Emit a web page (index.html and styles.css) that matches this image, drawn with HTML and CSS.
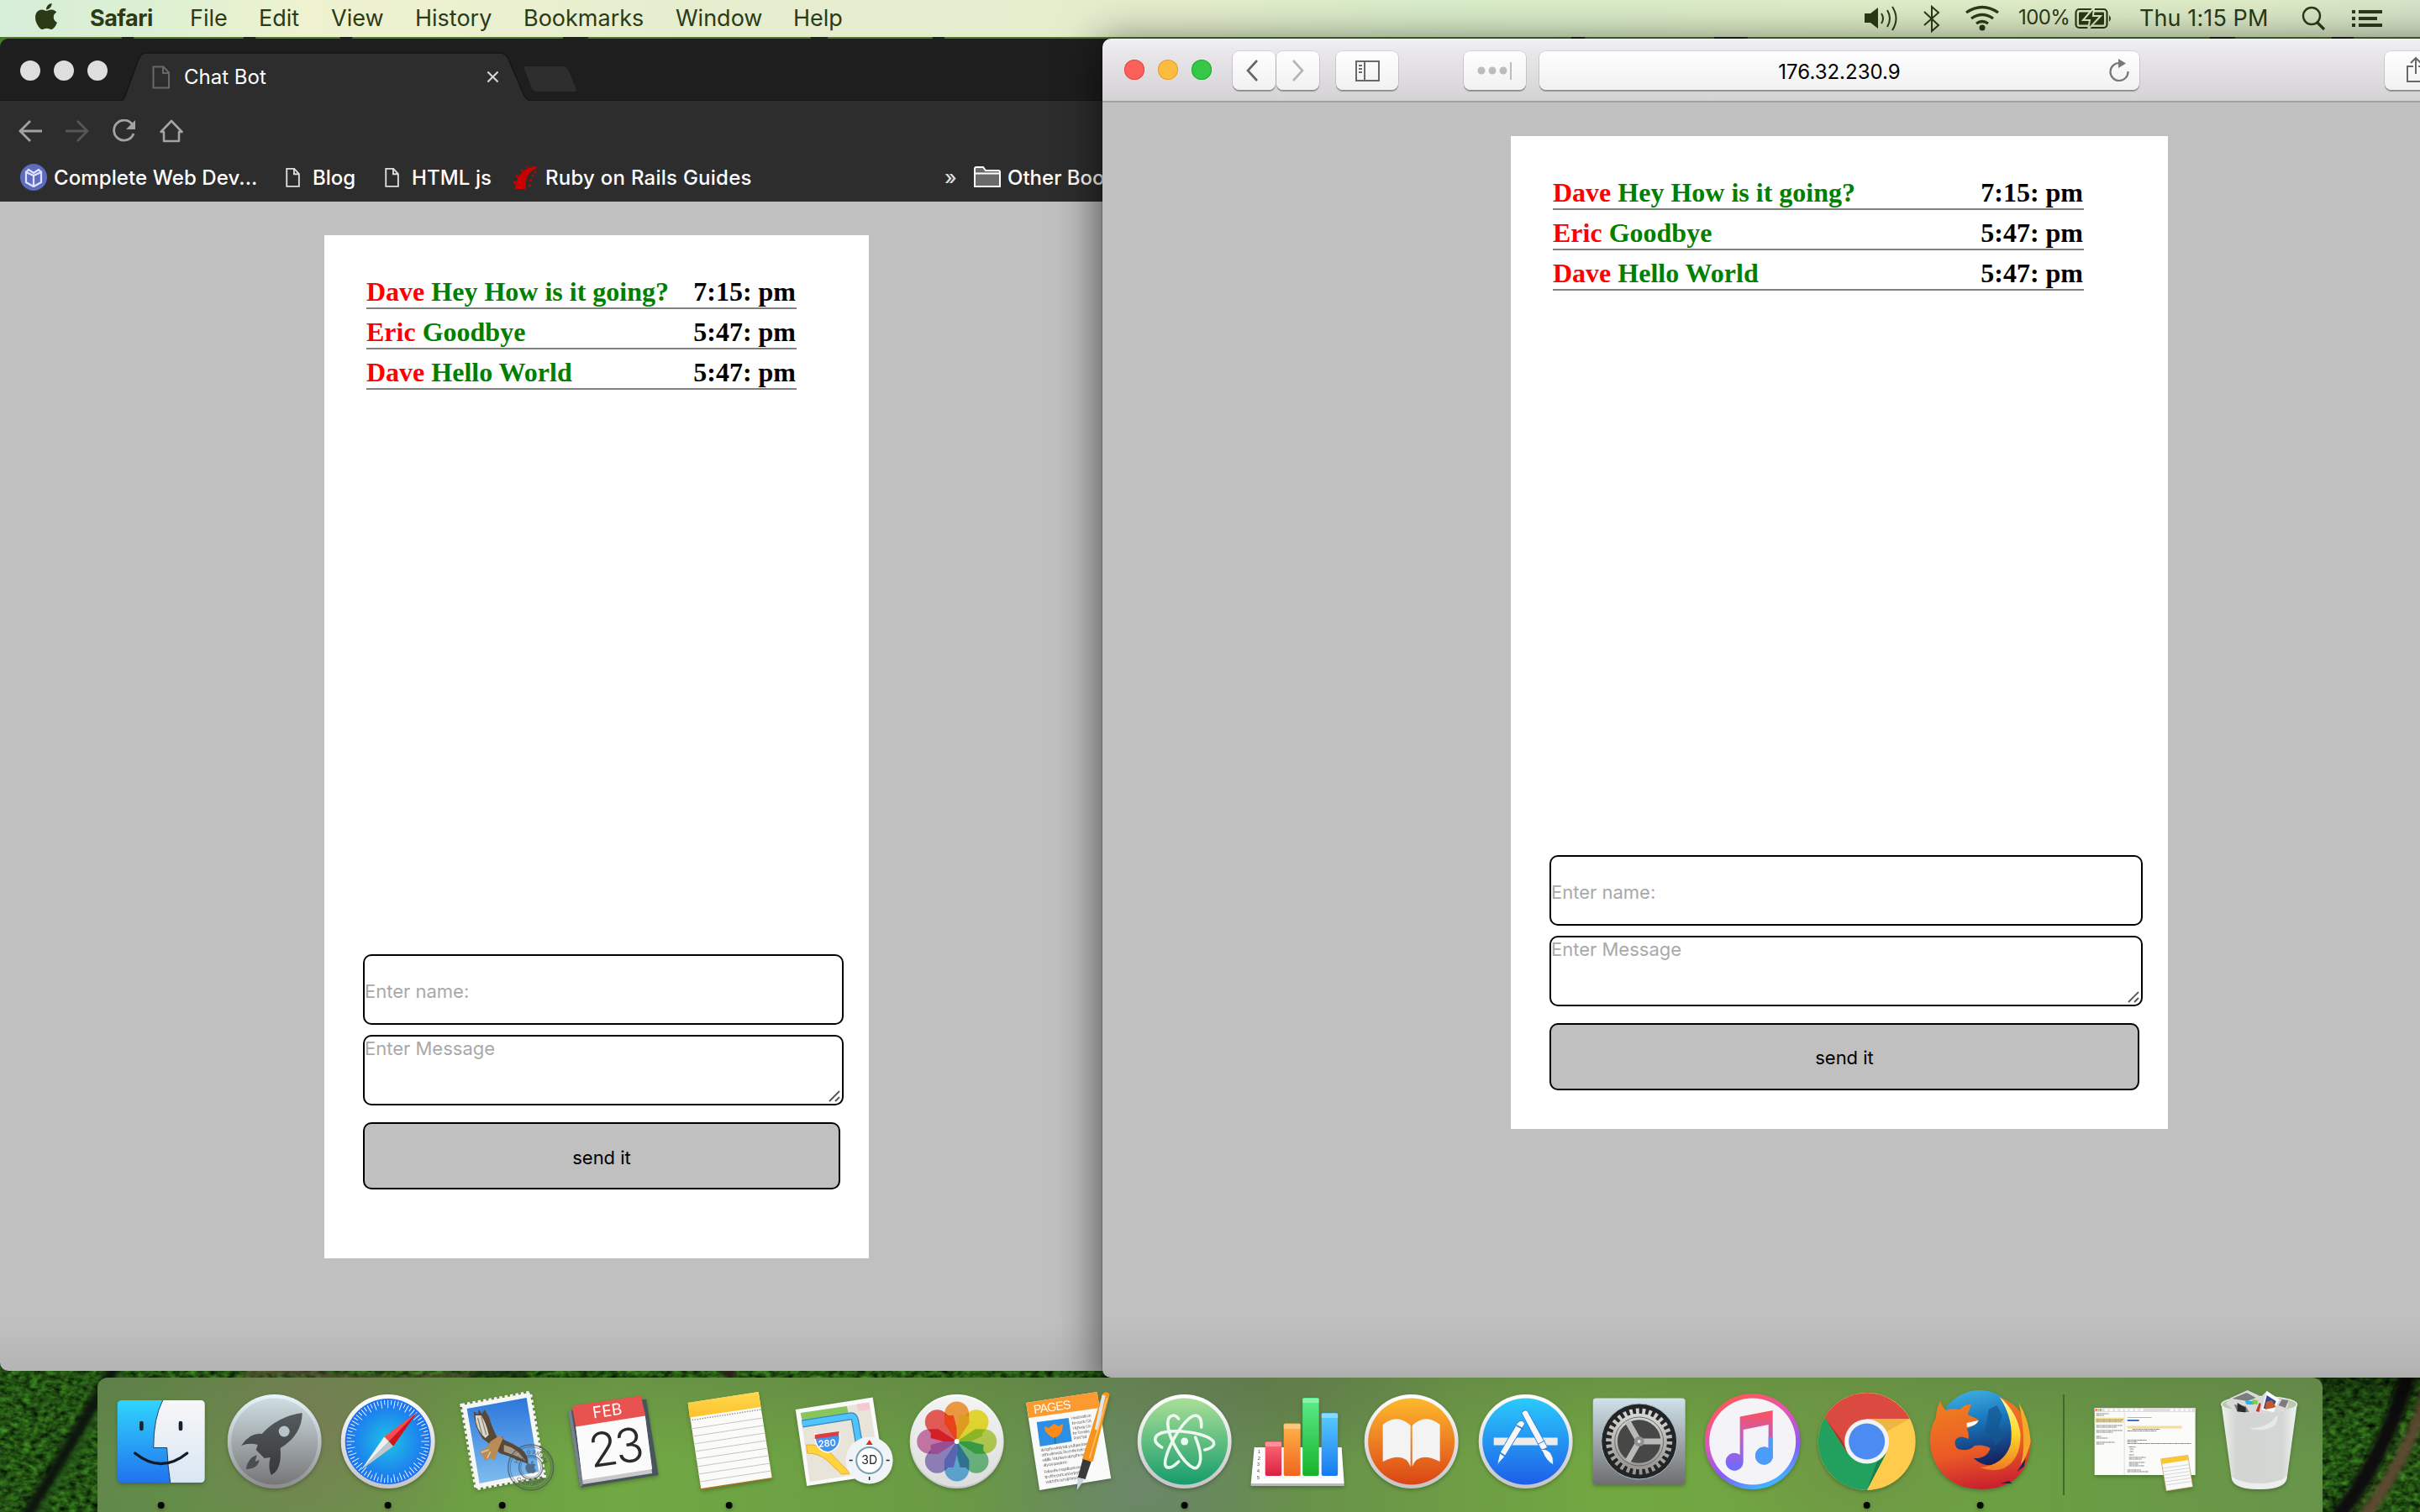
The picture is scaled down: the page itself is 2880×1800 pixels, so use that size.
FILE: index.html
```html
<!DOCTYPE html>
<html lang="en">
<head>
<meta charset="utf-8">
<title>Chat Bot</title>
<link rel="stylesheet" href="styles.css">
</head>
<body>
<div class="desktop">
  <svg class="wallpaper" viewBox="0 0 2880 1800" aria-hidden="true">
    <defs>
      <filter id="grass" x="0" y="0" width="100%" height="100%" color-interpolation-filters="sRGB">
        <feTurbulence type="fractalNoise" baseFrequency="0.11 0.16" numOctaves="3" seed="4"/>
        <feColorMatrix values="0.2 0.25 0 0 -0.09  0.35 0.55 0 0 -0.13  0.1 0.15 0 0 -0.05  0 0 0 0 1"/>
      </filter>
      <filter id="soft"><feGaussianBlur stdDeviation="3"/></filter>
    </defs>
    <rect width="2880" height="60" fill="#4a7a2a"/>
    <rect y="1600" width="2880" height="200" filter="url(#grass)"/>
    <g filter="url(#soft)" fill="none">
      <path d="M30 1808Q90 1710 138 1626" stroke="#0d120a" stroke-width="15"/>
      <path d="M44 1808Q104 1712 150 1626" stroke="#2a5f1e" stroke-width="4"/>
      <path d="M2812 1808Q2872 1725 2890 1650" stroke="#5d4a30" stroke-width="14"/>
      <path d="M2780 1808Q2836 1740 2866 1635" stroke="#0b0f08" stroke-width="20"/>
      <path d="M290 1637q60-8 90 0t180 2" stroke="#5e4a3a" stroke-width="6"/>
      <path d="M560 1637q30-6 70-2" stroke="#15200e" stroke-width="6"/>
      <path d="M860 1636h16" stroke="#2b1f14" stroke-width="12"/>
    </g>
    <path d="M145 46l14-3M290 46l14-3M405 46l14-3M670 46l30-3M965 46l20-3M1110 46l14-3M1870 46l16-3M2040 46l40-3M2630 46l30-3M2775 46l26-3" stroke="#1b2a12" stroke-width="5"/>
  </svg>

  <header class="menubar">
    <svg class="apple" viewBox="4 32 376 448"><path fill="currentColor" d="M318.700 268.700c-.2-36.700 16.400-64.400 50-84.800-18.800-26.900-47.200-41.700-84.700-44.600-35.500-2.800-74.300 20.700-88.500 20.700-15 0-49.400-19.700-76.400-19.700C63.300 141.200 4 184.800 4 273.500q0 39.300 14.400 81.200c12.800 36.700 59 126.700 107.200 125.200 25.200-.6 43-17.900 75.800-17.900 31.800 0 48.300 17.900 76.400 17.900 48.600-.7 90.400-82.500 102.600-119.300-65.200-30.700-61.700-90-61.700-91.900zm-56.600-164.200c27.300-32.400 24.800-61.900 24-72.500-24.100 1.400-52 16.400-67.900 34.900-17.500 19.800-27.800 44.300-25.600 71.900 26.100 2 49.900-11.400 69.500-34.300z"/></svg>
    <nav class="menus">
      <b class="m-safari">Safari</b><span class="m-file">File</span><span class="m-edit">Edit</span><span class="m-view">View</span><span class="m-history">History</span><span class="m-bookmarks">Bookmarks</span><span class="m-window">Window</span><span class="m-help">Help</span>
    </nav>
    <div class="status">
      <svg class="s-volume" viewBox="0 0 42 44"><path d="M0 16h7l9-7v25l-9-7H0z" fill="currentColor"/><path d="M20 16q4 6 0 12M27 12q6 10 0 20M33 8q9 14 0 28" fill="none" stroke="currentColor" stroke-width="2"/></svg>
      <svg class="s-bt" viewBox="0 0 20 44"><path d="M1 14l17 16-8 7V8l8 7L1 30" fill="none" stroke="currentColor" stroke-width="2"/></svg>
      <svg class="s-wifi" viewBox="0 0 42 44"><path d="M2 15q19-13 38 0M8 22q13-9 26 0M14 28q7-5 14 0" fill="none" stroke="currentColor" stroke-width="3.200"/><circle cx="21" cy="33" r="3.500" fill="currentColor"/></svg>
      <span class="percent">100%</span>
      <svg class="s-battery" viewBox="0 0 46 44"><rect x="1.500" y="11" width="37" height="22" rx="4" fill="none" stroke="currentColor" stroke-width="2.200"/><rect x="5" y="14.500" width="30" height="15" rx="1" fill="currentColor"/><path d="M41 18q4 4 0 8z" fill="currentColor"/><path d="M23 9L10 24h8l-2 11 15-16H22z" fill="currentColor" stroke="#dfedc9" stroke-width="2"/></svg>
      <span class="clock">Thu 1:15 PM</span>
      <svg class="s-search" viewBox="0 0 30 44"><circle cx="12" cy="19" r="10" fill="none" stroke="currentColor" stroke-width="2.400"/><path d="M18 26l9 9" stroke="currentColor" stroke-width="3.200"/></svg>
      <svg class="s-list" viewBox="0 0 36 44"><path d="M0 14h4M8 14h28M0 22h4M8 22h22M0 30h4M8 30h28" stroke="currentColor" stroke-width="4"/></svg>
    </div>
  </header>

  <section class="window chrome">
    <div class="tabstrip">
      <div class="lights"><i></i><i></i><i></i></div>
      <div class="tab">
        <svg class="tab-shape" viewBox="0 0 486 58"><path d="M0 58Q3 57 5 49L20 8Q23 2 28 1H452Q457 2 460 8L478 50Q481 57 486 58z" fill="#2d2d2d"/><path d="M0 57.500Q3 56 5 49L20 8Q23 2 28 1H452Q457 2 460 8L478 50Q481 57 486 57.500" fill="none" stroke="#151515" stroke-width="1.500"/></svg>
        <svg class="tab-doc" viewBox="0 0 22 28"><path d="M1.500 1.500h12l6.500 7v18H1.500zM13 1.500V9h7" fill="none" stroke="#686868" stroke-width="2"/></svg>
        <span class="tab-title">Chat Bot</span>
        <svg class="tab-close" viewBox="0 0 16 16"><path d="M1.500 1.500l13 13M14.500 1.500l-13 13" stroke="#d8d8d8" stroke-width="2.200"/></svg>
      </div>
      <svg class="newtab" viewBox="0 0 66 30"><path d="M3 0H47Q51 0 53 4L63 27Q64 30 60 30H16Q12 30 10 26L1 3Q0 0 3 0z" fill="#2e2e2e"/></svg>
    </div>
    <div class="nav">
      <svg viewBox="0 0 28 28"><path d="M28 14H3M14 2L2 14l12 12" fill="none" stroke="#a3a3a3" stroke-width="2.800"/></svg>
      <svg class="dim" viewBox="0 0 28 28"><path d="M0 14h25M14 2l12 12-12 12" fill="none" stroke="#575757" stroke-width="2.800"/></svg>
      <svg viewBox="0 0 28 28"><path d="M24 7A12 12 0 1 0 25 17" fill="none" stroke="#a3a3a3" stroke-width="2.800"/><path d="M27 1v11H16z" fill="#a3a3a3"/></svg>
      <svg viewBox="0 0 28 28"><path d="M1.500 15L14 2l12.500 13H23v11H5V15z" fill="none" stroke="#a3a3a3" stroke-width="2.600" stroke-linejoin="round"/></svg>
    </div>
    <div class="bookmarks">
      <svg class="bm-book" viewBox="0 0 32 32"><circle cx="16" cy="16" r="16" fill="#5e6cc0"/><path d="M7 10l9 4 9-4v12l-9 5-9-5zM16 14v12M7 10l3-3 6 4 6-4 3 3" fill="none" stroke="#dfe3ff" stroke-width="2.200"/></svg>
      <span class="bm-complete">Complete Web Dev...</span>
      <svg class="bm-doc d1" viewBox="0 0 18 25"><path d="M1.300 1.300h9.500l6 6.500V23.500H1.300zM10.500 1.300V8h6" fill="none" stroke="#ddd" stroke-width="2"/></svg>
      <span class="bm-blog">Blog</span>
      <svg class="bm-doc d2" viewBox="0 0 18 25"><path d="M1.300 1.300h9.500l6 6.500V23.500H1.300zM10.500 1.300V8h6" fill="none" stroke="#ddd" stroke-width="2"/></svg>
      <span class="bm-html">HTML js</span>
      <svg class="bm-ruby" viewBox="0 0 30 28"><path d="M2 28C3 16 10 2 27 1l1 2C18 7 13 16 15 28z" fill="#c00"/><path d="M0 20l3 1M3 12l3 2M9 5l2 2M16 1l1 1M22 13l2-1M19 18h3M18 24h3M25 8l2 0" stroke="#c00" stroke-width="2.400"/></svg>
      <span class="bm-rails">Ruby on Rails Guides</span>
      <span class="more">»</span>
      <svg class="bm-folder" viewBox="0 0 32 26"><path d="M1 24V3q0-2 2-2h8l3 4h15q2 0 2 2v17z" fill="#6a6a6a" stroke="#fff" stroke-width="2"/><path d="M1 8.500h30" stroke="#fff" stroke-width="2"/></svg>
      <span class="bm-other">Other Bookmarks</span>
    </div>
    <main class="page">
      <div class="chat">
        <ul class="messages">
          <li><span><em>Dave</em> <strong>Hey How is it going?</strong></span><time>7:15: pm</time></li>
          <li><span><em>Eric</em> <strong>Goodbye</strong></span><time>5:47: pm</time></li>
          <li><span><em>Dave</em> <strong>Hello World</strong></span><time>5:47: pm</time></li>
        </ul>
        <form class="compose">
          <input type="text" placeholder="Enter name:">
          <div class="area"><textarea placeholder="Enter Message"></textarea><svg class="grip" viewBox="0 0 14 14"><path d="M1 13L13 1M8 13l5-5" stroke="#555" stroke-width="1.800"/></svg></div>
          <button type="button">send it</button>
        </form>
      </div>
    </main>
  </section>

  <section class="window safari">
    <div class="toolbar">
      <div class="lights"><i class="red"></i><i class="yellow"></i><i class="green"></i></div>
      <div class="tb back"><svg viewBox="0 0 51 46"><path d="M29 11L18 23l11 12" fill="none" stroke="#666" stroke-width="2.600"/></svg></div>
      <div class="tb fwd"><svg viewBox="0 0 51 46"><path d="M20 11l11 12-11 12" fill="none" stroke="#b5b5b5" stroke-width="2.600"/></svg></div>
      <div class="tb side"><svg viewBox="0 0 74 46"><path d="M24 12h27v23H24zM34 12v23M27 17h4M27 21h4M27 25h4" fill="none" stroke="#686868" stroke-width="2"/></svg></div>
      <div class="tb dots"><svg viewBox="0 0 74 46"><g fill="#bcbcbc"><circle cx="21" cy="23" r="4.500"/><circle cx="34" cy="23" r="4.500"/><circle cx="47" cy="23" r="4.500"/><path d="M55 13h2v21h-2z"/></g></svg></div>
      <div class="tb url"><span>176.32.230.9</span><svg class="reload" viewBox="0 0 24 28"><path d="M12 5A10.500 10.500 0 1 0 22.500 15" fill="none" stroke="#777" stroke-width="2.200"/><path d="M11 0l9 5.500L11 11z" fill="#777"/></svg></div>
      <div class="tb share"><svg viewBox="0 0 74 46"><path d="M34 18h-7v18h20V18h-7M37 27V8M31 14l6-6 6 6" fill="none" stroke="#686868" stroke-width="2"/></svg></div>
    </div>
    <main class="page">
      <div class="chat">
        <ul class="messages">
          <li><span><em>Dave</em> <strong>Hey How is it going?</strong></span><time>7:15: pm</time></li>
          <li><span><em>Eric</em> <strong>Goodbye</strong></span><time>5:47: pm</time></li>
          <li><span><em>Dave</em> <strong>Hello World</strong></span><time>5:47: pm</time></li>
        </ul>
        <form class="compose">
          <input type="text" placeholder="Enter name:">
          <div class="area"><textarea placeholder="Enter Message"></textarea><svg class="grip" viewBox="0 0 14 14"><path d="M1 13L13 1M8 13l5-5" stroke="#555" stroke-width="1.800"/></svg></div>
          <button type="button">send it</button>
        </form>
      </div>
    </main>
  </section>

  <footer class="dock">
    <svg class="defs" width="0" height="0" aria-hidden="true"><defs>
      <linearGradient id="gFinder" x1="0" y1="0" x2="0" y2="1"><stop offset="0" stop-color="#2fd5fd"/><stop offset="1" stop-color="#2273ee"/></linearGradient>
      <linearGradient id="gFace" x1="0" y1="0" x2="0" y2="1"><stop offset="0" stop-color="#f7f7f8"/><stop offset="1" stop-color="#d9e6f4"/></linearGradient>
      <linearGradient id="gRim" x1="0" y1="0" x2="0" y2="1"><stop offset="0" stop-color="#fff"/><stop offset="1" stop-color="#c4c4c6"/></linearGradient>
      <linearGradient id="gLpRim" x1="0" y1="0" x2="0" y2="1"><stop offset="0" stop-color="#e6f6fc"/><stop offset="1" stop-color="#8c8c8e"/></linearGradient>
      <linearGradient id="gLp" x1="0" y1="0" x2="0" y2="1"><stop offset="0" stop-color="#cfdde2"/><stop offset="1" stop-color="#767677"/></linearGradient>
      <linearGradient id="gRocket" x1="0" y1="0" x2="0" y2="1"><stop offset="0" stop-color="#555b5e"/><stop offset="1" stop-color="#36383a"/></linearGradient>
      <radialGradient id="gCompass"><stop offset="0" stop-color="#1fc3e6"/><stop offset="1" stop-color="#1c6ff0"/></radialGradient>
      <linearGradient id="gSky" x1="0" y1="0" x2="0" y2="1"><stop offset="0" stop-color="#2b77dc"/><stop offset="1" stop-color="#7fbdee"/></linearGradient>
      <linearGradient id="gYellow" x1="0" y1="0" x2="0" y2="1"><stop offset="0" stop-color="#ffd84f"/><stop offset="1" stop-color="#fdc22a"/></linearGradient>
      <linearGradient id="gAtom" x1="0" y1="0" x2="0" y2="1"><stop offset="0" stop-color="#aadf97"/><stop offset="1" stop-color="#169c6b"/></linearGradient>
      <linearGradient id="gBook" x1="0" y1="0" x2="0" y2="1"><stop offset="0" stop-color="#fdb92c"/><stop offset=".5" stop-color="#ee7f22"/><stop offset="1" stop-color="#d94515"/></linearGradient>
      <linearGradient id="gStore" x1="0" y1="0" x2="0" y2="1"><stop offset="0" stop-color="#2acbfb"/><stop offset="1" stop-color="#1e5ee9"/></linearGradient>
      <linearGradient id="gSet" x1="0" y1="0" x2="0" y2="1"><stop offset="0" stop-color="#d0e2ea"/><stop offset="1" stop-color="#6e6e70"/></linearGradient>
      <linearGradient id="gGear" x1="0" y1="0" x2="0" y2="1"><stop offset="0" stop-color="#d2d6d2"/><stop offset="1" stop-color="#9a9693"/></linearGradient>
      <linearGradient id="gTunes" x1=".3" y1="0" x2=".7" y2="1"><stop offset="0" stop-color="#ff5a50"/><stop offset=".35" stop-color="#e255b5"/><stop offset=".7" stop-color="#8a5bfa"/><stop offset="1" stop-color="#2fc6ff"/></linearGradient>
      <linearGradient id="gNote" x1="0" y1="0" x2="0" y2="1"><stop offset="0" stop-color="#ff5258"/><stop offset=".55" stop-color="#b45fd6"/><stop offset="1" stop-color="#6a6cfc"/></linearGradient>
      <linearGradient id="gRed" x1="0" y1="0" x2="0" y2="1"><stop offset="0" stop-color="#fa6c78"/><stop offset="1" stop-color="#dc2140"/></linearGradient>
      <linearGradient id="gOrange" x1="0" y1="0" x2="0" y2="1"><stop offset="0" stop-color="#ffb64a"/><stop offset="1" stop-color="#f06420"/></linearGradient>
      <linearGradient id="gGreen" x1="0" y1="0" x2="0" y2="1"><stop offset="0" stop-color="#5eec8c"/><stop offset="1" stop-color="#17b32b"/></linearGradient>
      <linearGradient id="gBlue" x1="0" y1="0" x2="0" y2="1"><stop offset="0" stop-color="#5ccdfd"/><stop offset="1" stop-color="#157af1"/></linearGradient>
      <linearGradient id="gGlobe" x1="0" y1="0" x2=".2" y2="1"><stop offset="0" stop-color="#45b6e6"/><stop offset=".45" stop-color="#1878bd"/><stop offset="1" stop-color="#14205c"/></linearGradient>
      <linearGradient id="gFox" x1=".3" y1="0" x2=".5" y2="1"><stop offset="0" stop-color="#f08020"/><stop offset=".6" stop-color="#ea5a26"/><stop offset="1" stop-color="#c9202e"/></linearGradient>
      <linearGradient id="gTail" x1="0" y1="0" x2="0" y2="1"><stop offset="0" stop-color="#fff8a8"/><stop offset=".5" stop-color="#ffd72a"/><stop offset="1" stop-color="#ee7a22"/></linearGradient>
      <linearGradient id="gTrash" x1="0" y1="0" x2="1" y2="0"><stop offset="0" stop-color="#f4f5f5"/><stop offset=".2" stop-color="#d6d8d8"/><stop offset=".8" stop-color="#d8dada"/><stop offset="1" stop-color="#f6f7f7"/></linearGradient>
      <path id="petal" d="M0 0L-14.500-22V-33A14.500 14.500 0 0 1 14.500-33V-22z"/>
    </defs></svg>

    <!-- Finder -->
    <svg class="app" viewBox="-67.700 -76 135.400 160">
      <rect x="-52" y="-49" width="104" height="98" rx="5" fill="url(#gFinder)"/>
      <path d="M2-49H47q5 0 5 5V44q0 5-5 5H11Q8 30 7 7.500H-9Q-9-28 2-49z" fill="url(#gFace)"/>
      <path d="M2-49Q-9-28-9 7.500H7Q8 30 11 49" fill="none" stroke="#19406b" stroke-width="1"/>
      <path d="M-23.300-22v7M23.300-22v7" stroke="#16232f" stroke-width="4.600" stroke-linecap="round"/>
      <path d="M-31 14Q0 39 31 14" fill="none" stroke="#111c28" stroke-width="3.400" stroke-linecap="round"/>
      <circle cy="76" r="4" fill="#020602"/>
    </svg>
    <!-- Launchpad -->
    <svg class="app" viewBox="-67.700 -76 135.400 160">
      <circle r="56" fill="url(#gLpRim)"/><circle r="51.500" fill="url(#gLp)"/>
      <path d="M33-34Q4-30-15-9Q-29-11-39.500 5Q-30 1-20 4L-22 10-12 20-5 19Q-8 30-4 40Q9 34 7 8Q33-8 33-34z" fill="url(#gRocket)"/>
      <path d="M-21 16Q-32 20-34 33Q-20 33-18 22L-23 24z" fill="#4a4e51"/>
      <circle cx="11.500" cy="-12" r="6.500" fill="#b8c4c9"/>
    </svg>
    <!-- Safari -->
    <svg class="app" viewBox="-67.700 -76 135.400 160">
      <circle r="56" fill="url(#gRim)"/><circle r="51" fill="url(#gCompass)"/>
      <circle r="46.500" fill="none" stroke="#e8f4ff" stroke-width="5.500" pathLength="720" stroke-dasharray="2.600 17.400" stroke-dashoffset="11.300"/>
      <circle r="44.500" fill="none" stroke="#e8f4ff" stroke-width="9.500" pathLength="720" stroke-dasharray="2.600 17.400" stroke-dashoffset="1.300"/>
      <path d="M35-35L-4.500-5.500 1 0z" fill="#fa4c4a"/><path d="M35-35L6.400 5.700 1 0z" fill="#d4131c"/>
      <path d="M-32 34L-4.500-5.500 1 0z" fill="#f0f0f0"/><path d="M-32 34L6.400 5.700 1 0z" fill="#c4c6c8"/>
      <circle cy="76" r="4" fill="#020602"/>
    </svg>
    <!-- Mail -->
    <svg class="app" viewBox="-67.700 -76 135.400 160">
      <path d="M-48-43L33-58 50 41-31 56z" fill="#f6f6f6" stroke="#f6f6f6" stroke-width="4.500" stroke-dasharray="3.500 3"/>
      <path d="M-42-39L29-52 43.600 36-27 50z" fill="url(#gSky)"/>
      <path d="M-34-36L-29-32-28-38-24-33-21-38-16-30Q-12-16-6-5L0-6 2-2Q12 2 23 9Q31 16 31 27L24 24 18 22 6 17-3 14-12 5-23-3Q-33-16-34-36z" fill="#5a4837"/>
      <path d="M-32-31L-25-31Q-19-22-16-8L-20-4Q-32-14-32-31z" fill="#d9d5cc"/>
      <path d="M-29-28L-24-8M-25-30L-19-8" stroke="#8f8474" stroke-width="1.200"/>
      <path d="M-14 0L-3-7 1-4-4 8-9 22-15 20-20 23-27 12-18 7z" fill="#b98c57"/><path d="M-16 10L-25 13M-14 12L-18 20" stroke="#e2c79b" stroke-width="1.500"/>
      <path d="M2 4Q18 8 28 23L18 18 2 12z" fill="#a79a88"/>
      <g opacity=".65"><circle cx="34" cy="31" r="27" fill="none" stroke="#444d5c" stroke-width="1.500"/><circle cx="34" cy="31" r="24.500" fill="none" stroke="#444d5c" stroke-width=".8"/><circle cx="34" cy="31" r="14" fill="none" stroke="#444d5c" stroke-width="1.500"/><circle cx="34" cy="31" r="12" fill="none" stroke="#444d5c" stroke-width=".8"/>
      <path id="arcTop" d="M18 31A16 16 0 0 1 50 31" fill="none"/><path id="arcBot" d="M12 31A22 22 0 0 0 56 31" fill="none"/>
      <text class="stamp"><textPath href="#arcTop" startOffset="50%" text-anchor="middle">HELLO FROM</textPath></text><text class="stamp"><textPath href="#arcBot" startOffset="50%" text-anchor="middle">CALIFORNIA</textPath></text>
      <svg x="27" y="23" width="14" height="15" viewBox="4 32 376 448"><path fill="#3f4959" d="M318.700 268.700c-.2-36.700 16.400-64.400 50-84.800-18.800-26.900-47.200-41.700-84.700-44.600-35.500-2.800-74.300 20.700-88.500 20.700-15 0-49.400-19.700-76.400-19.700C63.300 141.200 4 184.800 4 273.500q0 39.300 14.400 81.200c12.800 36.700 59 126.700 107.200 125.200 25.200-.6 43-17.900 75.800-17.900 31.800 0 48.300 17.900 76.400 17.900 48.600-.7 90.400-82.500 102.600-119.300-65.200-30.700-61.700-90-61.700-91.900zm-56.600-164.200c27.300-32.400 24.800-61.900 24-72.500-24.100 1.400-52 16.400-67.900 34.900-17.500 19.800-27.800 44.300-25.600 71.900 26.100 2 49.900-11.400 69.500-34.300z"/></svg></g>
      <circle cy="76" r="4" fill="#020602"/>
    </svg>
    <!-- Calendar -->
    <svg class="app" viewBox="-67.700 -76 135.400 160">
      <path d="M-56.500-36L36.500-50.500 51 40-42.500 55z" fill="#4a545d"/><path d="M-56.500-36L-53-38-39 52-42.500 55z" fill="#77828c"/>
      <path d="M-47.500-18L35-31 43.500 38-39 51z" fill="#c9c9c9"/>
      <path d="M-47.500-18L35-31 43.500 33-39.500 46z" fill="#fbfbfb"/>
      <path d="M-52-42.500L30-54.500 35.500-30.500-47.500-17.500z" fill="#e9534f"/>
      <text class="cal-month" text-anchor="middle" transform="translate(-9 -30) rotate(-8.500)">FEB</text>
      <text class="cal-day" text-anchor="middle" transform="translate(2 27) rotate(-8.500)">23</text>
    </svg>
    <!-- Notes -->
    <svg class="app" viewBox="-67.700 -76 135.400 160">
      <path d="M-49-45L35-58 51.500 44-33 58z" fill="#a8761c"/>
      <path d="M-49-46L35-59 51 43-33.500 56z" fill="#fbfbfa"/>
      <path d="M-49-46L35-59 38-41-47-28.500z" fill="url(#gYellow)"/>
      <path d="M-47-25L38-38" stroke="#999" stroke-width="1.500" stroke-dasharray="1.500 1.500"/>
      <path d="M-45-15L40-28M-44-6L41-19M-42 3L43-10M-41 12L44-1M-40 21L46 8M-38 30L47 17M-37 39L49 26M-35 48L50 35" stroke="#c6c6c6" stroke-width="1.200"/>
      <circle cy="76" r="4" fill="#020602"/>
    </svg>
    <!-- Maps -->
    <svg class="app" viewBox="-67.700 -76 135.400 160">
      <path d="M-57-38L35-52.500 49 39-43.500 53z" fill="#fafafa"/>
      <path d="M-51-33.500L31-46.500 44 35-40 48z" fill="#e9e4d9"/>
      <path d="M-51-34L4-42 6-34-49-25z" fill="#86c65c"/><path d="M16-44.500L30-46.500 32-38 18-36z" fill="#f6c9d4"/>
      <path d="M-49-21L8-30Q13-31 14-25L20 10" fill="none" stroke="#3a86bd" stroke-width="9"/><path d="M-49-21L8-30Q13-31 14-25L20 10" fill="none" stroke="#4fc3fb" stroke-width="6.500"/>
      <path d="M-44 4Q-26 3-15 14L8 38-2 39-20 22Q-30 14-43 14z" fill="#ffd43c" stroke="#e8a93a"/>
      <path d="M-34-9Q-20-4-5-11Q-1 8-18 13Q-34 11-34-9z" fill="#4294ee" stroke="#fff" stroke-width="1.500"/><path d="M-34-8L-5-12-6-7-34-3z" fill="#dd3d40"/>
      <text class="shield" text-anchor="middle" transform="translate(-19 6) rotate(-6)">280</text>
      <circle cx="31" cy="22.500" r="28" fill="#f1f4f7"/><circle cx="31" cy="22.500" r="15.500" fill="#fff" stroke="#72a0b8" stroke-width="2"/>
      <path d="M31-2l-4 6h8z" fill="#e02a1c"/><path d="M7 22.500h4M51 22.500h4M31 42v4" stroke="#222" stroke-width="1.500"/>
      <text class="three-d" text-anchor="middle" x="31" y="27.500">3D</text>
    </svg>
    <!-- Photos -->
    <svg class="app" viewBox="-67.700 -76 135.400 160">
      <circle r="56" fill="url(#gRim)"/><circle r="54" fill="#ececed" opacity=".6"/>
      <g class="petals">
        <use href="#petal" fill="#f9a144"/><use href="#petal" fill="#efe434" transform="rotate(45)"/><use href="#petal" fill="#bdd955" transform="rotate(90)"/><use href="#petal" fill="#74c48a" transform="rotate(135)"/><use href="#petal" fill="#67b7e8" transform="rotate(180)"/><use href="#petal" fill="#9d8ccb" transform="rotate(225)"/><use href="#petal" fill="#d380b4" transform="rotate(270)"/><use href="#petal" fill="#f2605c" transform="rotate(315)"/>
      </g>
      <g><path d="M0 0L-14.500-22V-31L-4-31 0-16z" fill="#e9431c"/><path d="M0 0L14.500-22V-30L4-32 0-16z" fill="#dd9c1d"/><path d="M0 0L22-14.500H31L30-6 16 0z" fill="#8cb525"/><path d="M0 0L22 14.500H31L32 4 16 0z" fill="#379a42"/><path d="M0 0L14.500 22V31L4 31 0 16z" fill="#2f718f"/><path d="M0 0L-14.500 22V31L-4 31 0 16z" fill="#5a63b0"/><path d="M0 0L-22 14.500H-31L-31 4-16 0z" fill="#9a4d90"/><path d="M0 0L-22-14.500H-31L-31-4-16 0z" fill="#d51f27"/></g>
      <circle r="3" fill="#fff"/>
    </svg>
    <!-- Pages -->
    <svg class="app" viewBox="-67.700 -76 135.400 160">
      <path d="M-52.600-46L32-59 48.500 44-36.500 58z" fill="#fafafa"/><path d="M-52.600-46L32-59 35-40-49.500-28z" fill="#fb9a2f"/>
      <text class="pages" transform="translate(-43 -33) rotate(-8)">PAGES</text>
      <path d="M-40-23L-2-28 2 0-36 6z" fill="#2b8fe6"/><path d="M-19-4Q-30-8-31-18L-26-16-19-21-14-18-9-21Q-8-8-19-4z" fill="#ff8a1a"/><path d="M-18-5v8" stroke="#3e7a2c" stroke-width="1.500"/>
      <g class="pages-copy"><text transform="translate(1 -26) rotate(-8)">Head north on</text><text transform="translate(2 -20) rotate(-8)">the scenic CA</text><text transform="translate(3 -14) rotate(-8)">Highway 1 to</text><text transform="translate(3 -8) rotate(-8)">the Tomales</text><text transform="translate(4 -2) rotate(-8)">Point Trail</text><text transform="translate(-35 12) rotate(-8)">along the windy trail, you'll get close</text><text transform="translate(-34 18) rotate(-8)">of the elk herds. Be on the look out</text><text transform="translate(-33 24) rotate(-8)">wildlife. Volunteers along the way</text><text transform="translate(-32 30) rotate(-8)">all your questions.</text><text transform="translate(-31 38) rotate(-8)">Follow the magnificent ocean</text><text transform="translate(-30 44) rotate(-8)">tip of the point, and enjoy the</text><text transform="translate(-29 50) rotate(-8)">watch the sun dip beyond</text></g>
      <path d="M38-56Q43-62 47-56L27 24 14 22z" fill="#f7941e"/><path d="M40-55L31-14" stroke="#dbe6ee" stroke-width="4"/><path d="M44-52L23 20" stroke="#ffc46f" stroke-width="1.500"/>
      <path d="M15 21L25 24 18 45 9 43z" fill="#3a3a3c"/><path d="M9 43l8 2L8 58z" fill="#c8d4de"/>
    </svg>
    <!-- Atom -->
    <svg class="app" viewBox="-67.700 -76 135.400 160">
      <circle r="56" fill="url(#gRim)"/><circle r="51.500" fill="url(#gAtom)"/>
      <g fill="none" stroke="#edf8ef" stroke-width="3.600" stroke-linecap="round"><path d="M-27 7Q-39 0-33-7C-22-18 36-10 35 3Q34 8 24 10"/><path d="M-7-27Q-12-34-18-29C-28-14 4 38 15 31Q24 22 13-5"/><path d="M20-17Q21-30 13-31C-2-30-29 22-22 30Q-17 34-7 24"/></g><circle r="4.500" fill="#edf8ef"/>
      <circle cy="76" r="4" fill="#020602"/>
    </svg>
    <!-- Numbers -->
    <svg class="app" viewBox="-67.700 -76 135.400 160">
      <path d="M-52 7H52L55 50H-56z" fill="#fdfdfd"/><path d="M-56 50H55V53H-56z" fill="#bcbcbc"/>
      <g class="rows"><text x="-48" y="14">1</text><text x="-48" y="22">2</text><text x="-49" y="29">3</text><text x="-49" y="37">4</text><text x="-49" y="45">5</text></g>
      <rect x="-39" width="19.500" height="41" rx="2" fill="url(#gRed)"/><rect x="-17" y="-21.500" width="20" height="62.500" rx="2" fill="url(#gOrange)"/><rect x="5.500" y="-52" width="19.500" height="93" rx="2" fill="url(#gGreen)"/><rect x="28" y="-34" width="19.500" height="75" rx="2" fill="url(#gBlue)"/>
      <path d="M-39 1h19.500v5H-39zM-17-20.500H3v5.500h-20zM5.500-51H25v5H5.500zM28-33h19.500v5H28z" fill="#fff" opacity=".3"/>
    </svg>
    <!-- iBooks -->
    <svg class="app" viewBox="-67.700 -76 135.400 160">
      <circle r="56" fill="url(#gRim)"/><circle r="51.500" fill="url(#gBook)"/>
      <path d="M-1 30Q-8 11-34 24V-20Q-17-34-1-19zM1 30Q8 11 34 24V-20Q17-34 1-19z" fill="#f3f3f3"/>
    </svg>
    <!-- App Store -->
    <svg class="app" viewBox="-67.700 -76 135.400 160">
      <circle r="56" fill="url(#gRim)"/><circle r="51.500" fill="url(#gStore)"/>
      <path d="M-38-4.500H38V4.500H-38z" fill="#ececec"/>
      <g stroke="#257fe9" stroke-width="1"><path d="M-10-22Q-4-28-1-21L-25 18-34 28-31 14z" fill="#f8f8f8"/><path d="M-11-19l8 4M-31 13l7 5" stroke-width="1.800"/><path d="M-5-34Q1-41 4-33L26 7 19 11z" fill="#f8f8f8"/><path d="M15 3l8-4M17 9Q34 8 33 28Q24 23 20 12z" fill="#f8f8f8"/></g>
    </svg>
    <!-- System Preferences -->
    <svg class="app" viewBox="-67.700 -76 135.400 160">
      <rect x="-55" y="-51.500" width="110" height="103" rx="4" fill="url(#gSet)"/>
      <circle r="45" fill="#232425" stroke="#a9c2cf" stroke-width="1"/>
      <circle r="36" fill="none" stroke="url(#gGear)" stroke-width="7" pathLength="360" stroke-dasharray="6 6"/>
      <circle r="29.500" fill="#474747" stroke="url(#gGear)" stroke-width="7.500"/><circle r="29" fill="none" stroke="#696b69" stroke-width="1"/>
      <path d="M0 0H27M0 0L-13.500-23.500M0 0L-13.500 23.500" stroke="#b9bbb7" stroke-width="7"/><circle r="6" fill="#8d9194"/><circle r="2" fill="#ddd"/>
    </svg>
    <!-- iTunes -->
    <svg class="app" viewBox="-67.700 -76 135.400 160">
      <circle r="57" fill="url(#gTunes)"/><circle r="51.500" fill="#f4f4f8"/>
      <path d="M-15-29.500L24-37V15A10.500 10.500 0 1 1 19 8V-20L-11-14V24A10.500 10.500 0 1 1-15 16z" fill="url(#gNote)"/><path d="M24-5V15A10.500 10.500 0 1 1 19 8V-5z" fill="#4b9dfb"/>
    </svg>
    <!-- Chrome -->
    <svg class="app" viewBox="-67.700 -76 135.400 160">
      <circle r="58" fill="#fecb4c"/>
      <path d="M-50.200-29A58 58 0 0 1 51-27H0L-23 14z" fill="#da4a40"/>
      <path d="M-50.200-29A58 58 0 0 0 0 58L23 14-23 14z" fill="#21a05e"/><path d="M0-27H51L24-12z" fill="#e3a93a" opacity=".6"/><path d="M0 58L23 14 12 25z" fill="#16804a"/><path d="M-50.200-29L-23 14-29 0z" fill="#a42f2a"/>
      <circle r="26.500" fill="#f3f3f3"/><circle r="21.500" fill="#4c8bf2"/>
      <circle cy="76" r="4" fill="#020602"/>
    </svg>
    <!-- Firefox -->
    <svg class="app" viewBox="-67.700 -76 135.400 160">
      <circle cx="-1" cy="-13" r="48" fill="url(#gGlobe)"/>
      <path d="M10-38l10-5 6 12-4 14 6 12-10 10-6-14-7-3 3-13z" fill="#155590" opacity=".7"/>
      <path d="M23-53Q45-44 52-27Q61-11 60 4Q58 34 37 48Q12 62-20 54Q-55 42-60 3Q-61-14-53-28Q-52-40-48-48Q-45-41-41-37Q-34-40-24-38Q-20-44-11-44Q-13-38-15-32L-2-26Q-2-21-10-18L-16-15Q-13-9-14-3Q-25-9-30-1Q-31 10-21 10Q-12 11-7 5Q4 3 12 8Q8 21-8 20Q8 34 24 24Q42 6 38-20Q34-40 23-53z" fill="url(#gFox)"/>
      <path d="M23-53Q45-34 48-8Q48 22 28 32Q14 37 0 31Q28 28 36 4Q41-25 23-53z" fill="url(#gTail)"/>
      <path d="M46-46Q58-27 60 0Q56 18 48 28Q56 2 46-46z" fill="#f6a928"/><path d="M-16-22l14-3q-3 7-14 8z" fill="#fff"/><path d="M54 20L44 36 52 30zM34 47L24 50 38 50z" fill="#22235c"/>
      <circle cy="76" r="4" fill="#020602"/>
    </svg>

    <div class="divider"></div>

    <!-- Minimized Notes window -->
    <svg class="app" viewBox="-67.700 -76 135.400 160">
      <rect x="-60" y="-40" width="120" height="80" fill="#fbfbf9"/><rect x="-60" y="-40" width="120" height="5" fill="#dedede"/>
      <circle cx="-58" cy="-37.500" r="1" fill="#f33"/><circle cx="-55.500" cy="-37.500" r="1" fill="#fa2"/><circle cx="-53" cy="-37.500" r="1" fill="#2b3"/>
      <path d="M-48-37.500H0M30-37.500H56" stroke="#fff" stroke-width="2.500" stroke-dasharray="4 2"/>
      <rect x="-60" y="-28.500" width="35" height="6.500" fill="#f8e49b"/><path d="M-24.500-35V40" stroke="#ddd"/>
      <path d="M-58-33h15M-58-31h9M-58-26h32M-58-24h30M-58-19h31M-58-17h24M-58-13h31M-58-11h20M-58-6h6M-58-4h14M-58 1h22M-58 3h9M-15-14.500H18M-21-12.500H14M-21-1.500H2M-21 .5h12M-21 2.500H55M-19 6.500h8M-18 9h5M-18 12h4M-19 16h6M-19 19H1M-19 21H-4M-19 25H0M-19 27H-8M-19 29H-1M-21 34H-5M-21 36H4" stroke="#888" stroke-width="1" stroke-dasharray="4 .6 2 .4"/>
      <path d="M-21-28.500H8" stroke="#eab04a"/><path d="M-21-25H-7" stroke="#3b78c4" stroke-width="2"/><rect x="-21" y="-18.500" width="65" height="3" fill="#f4dc9d"/>
      <path d="M19 21L51 16.500 57 54 25.400 59z" fill="#fafafa" stroke="#b59653" stroke-width=".7"/><path d="M19 21L51 16.500 52 22 20 27z" fill="#fdc62f"/>
      <path d="M21 32l32-4.500M22 36l32-4.500M22 40l32-4.500M23 44l32-4.500M24 48l31-4.500M25 52l31-4.500" stroke="#ccc" stroke-width=".8"/>
    </svg>
    <!-- Trash -->
    <svg class="app" viewBox="-67.700 -76 135.400 160">
      <ellipse cy="-44" rx="45" ry="9.500" fill="#b9c9b0" stroke="#e6ebe6" stroke-width="1.500"/>
      <path d="M-34-52L-14-61-3-56 2-53 9-60 24-50 36-51 34-40 22-34-26-34-40-45z" fill="#d9d9d9"/>
      <path d="M-32-51l17-7 11 6-10 4zM-30-44l14 2 4 7-14 0zM27-50l8 1-4 9-8-3z" fill="#7d7d7d"/><path d="M9-60l15 10-7 15-14-3z" fill="#fff"/><path d="M9-55l11 7-3 8-12 1z" fill="#33499c"/><path d="M8-47l7-2 5 8-13 3z" fill="#c4592c"/><path d="M-17-48l10 0 1 4-9 0z" fill="#24b4ee"/><path d="M-8-50L-2-49-2-44-8-45z" fill="#76d43a"/><path d="M-4-36l4-10 2 1-2 10z" fill="#c23a22"/><path d="M-26-46l10 6 0 7-10-1z" fill="#2b2b2b"/>
      <path d="M-45-44Q-40-34 0-34Q40-34 45-44L33 44Q31 57 0 57Q-31 57-33 44z" fill="url(#gTrash)" opacity=".97"/>
      <path d="M-12-16Q10-15 22-32Q23-16 5-14Q-6-13-12-16z" fill="#f0f0f0" opacity=".7"/><path d="M-33 42Q-20 50 0 50T33 42Q31 57 0 57T-33 42z" fill="#f7f8f8" opacity=".7"/>
    </svg>
  </footer>
</div>
</body>
</html>
```
FILE: styles.css
```css
* { box-sizing: border-box; }
body { margin: 0; background: #1d3c14; font-family: Inter, "Liberation Sans", sans-serif; }
svg { display: block; flex: none; }
.desktop { position: relative; width: 2880px; height: 1800px; overflow: hidden; }
.wallpaper { position: absolute; inset: 0; width: 2880px; height: 1800px; }

/* Menu bar */
.menubar {
  position: relative; display: flex; justify-content: space-between; height: 44px;
  padding: 0 45px 0 42px; color: #2b3b17; font-size: 27px; line-height: 44px;
  background: linear-gradient(90deg, #d6edd8 0, #ddf0d2 190px, #eff2cf 370px, #e6eed0 800px, #e3edcb 1440px, #d9edca 1700px, #dfedc8 2200px, #ddebc7 2700px, #d6e4c9 2880px);
}
.apple { width: 26px; height: 31px; margin-top: 4px; }
.menus { display: flex; gap: 38px; margin-left: 39px; flex: 1; white-space: nowrap; }
.m-safari { width: 81px; letter-spacing: -.5px; } .m-file { width: 44px; } .m-edit { width: 48px; } .m-view { width: 62px; }
.m-history { width: 91px; } .m-bookmarks { width: 143px; } .m-window { width: 102px; } .m-help { width: 62px; }
.status { display: flex; }
.status svg { height: 44px; }
.s-volume { width: 42px; margin-right: 28px; } .s-bt { width: 20px; margin-right: 29px; } .s-wifi { width: 42px; margin-right: 22px; }
.percent { width: 60px; margin-right: 7px; font-size: 24px; letter-spacing: -.6px; line-height: 42px; white-space: nowrap; }
.s-battery { width: 46px; margin-right: 31px; }
.clock { width: 157px; margin-right: 36px; letter-spacing: .1px; white-space: nowrap; }
.s-search { width: 30px; margin-right: 30px; } .s-list { width: 36px; }

/* Windows */
.window { position: absolute; display: flex; flex-direction: column; overflow: hidden; }
.page { flex: 1; background: silver; }
.chrome { left: 0; top: 46px; width: 1420px; height: 1586px; border-radius: 10px; background: #2d2d2d; }
.safari { left: 1312px; top: 46px; width: 1630px; height: 1594px; border-radius: 10px; box-shadow: 0 10px 50px 6px rgba(0,0,0,.55), 0 0 2px rgba(0,0,0,.6); }
.chrome .page { background: linear-gradient(0deg, #b4b4b4 0, silver 60px); }
.safari .page { background: linear-gradient(0deg, #adadad 0, #b4b4b4 10px, silver 70px); }
.lights { display: flex; gap: 16px; }
.lights i { width: 24px; height: 24px; border-radius: 50%; background: #dedede; }

/* Chrome */
.tabstrip { display: flex; height: 74px; background: #1e1e1e; border-bottom: 1px solid #151515; }
.tabstrip .lights { margin: 26px 17px 0 24px; }
.tab { position: relative; display: flex; align-items: center; width: 486px; height: 58px; margin-top: 16px; padding: 1px 37px 0 36px; }
.tab-shape { position: absolute; left: 0; top: 0; width: 486px; height: 58px; }
.tab-doc { position: relative; width: 22px; height: 28px; margin-right: 16px; }
.tab-title { position: relative; flex: 1; color: #fff; font-size: 24px; letter-spacing: 0; }
.tab-close { position: relative; width: 15px; height: 15px; }
.newtab { width: 66px; height: 30px; margin: 33px 0 0 -8px; }
.nav { display: flex; gap: 28px; height: 70px; padding: 22px 0 0 22px; }
.nav svg { width: 28px; height: 28px; }
.bookmarks { display: flex; align-items: center; height: 50px; padding: 0 0 8px 24px; color: #fff; font-size: 24px; font-weight: 500; white-space: nowrap; }
.bookmarks > * { flex: none; }
.bm-book { width: 32px; height: 32px; margin-right: 8px; }
.bm-complete { width: 276px; letter-spacing: .1px; }
.bm-doc { width: 17px; height: 25px; }
.bm-blog { width: 86px; margin-left: 15px; letter-spacing: 0; }
.bm-html { width: 121px; margin-left: 15px; letter-spacing: .1px; }
.bm-ruby { width: 30px; height: 28px; margin-right: 8px; }
.bm-rails { width: 475px; letter-spacing: .25px; }
.more { width: 35px; color: #ddd; }
.bm-folder { width: 32px; height: 26px; margin-right: 8px; }

/* Safari */
.toolbar { display: flex; height: 76px; padding: 15px 0 0 26px; background: linear-gradient(#f2f1f3, #e9e7ea 15px, #d5d3d6 72px); border-bottom: 2px solid #a3a1a4; }
.toolbar .lights { margin: 10px 25px 0 0; }
.lights .red { background: #fc605b; box-shadow: inset 0 0 0 1px #e04844; }
.lights .yellow { background: #fdbc40; box-shadow: inset 0 0 0 1px #dfa034; }
.lights .green { background: #34c748; box-shadow: inset 0 0 0 1px #24a934; }
.tb { flex: none; height: 46px; border-radius: 8px; background: linear-gradient(#fefefe, #f1f1f1); box-shadow: 0 0 0 1px rgba(0,0,0,.09), 0 1.500px 1px rgba(0,0,0,.3); }
.tb svg { height: 46px; }
.back, .fwd { width: 51px; }
.fwd { margin: 0 20px 0 1px; }
.side { width: 74px; margin-right: 78px; }
.dots { width: 74px; margin-right: 16px; }
.url { display: flex; align-items: center; justify-content: center; width: 714px; margin-right: 292px; padding-left: 36px; font-size: 24px; line-height: 46px; }
.url span { flex: 1; text-align: center; letter-spacing: 0; padding-top: 4px; }
.url .reload { width: 24px; height: 28px; margin-right: 12px; }
.share { width: 74px; }

/* Chat page */
.chat { display: flex; flex-direction: column; justify-content: space-between; background: #fff; }
.chrome .chat { width: 648px; height: 1218px; margin: 40px 0 0 386px; padding: 40px 0 82px; }
.safari .chat { width: 782px; height: 1182px; margin: 40px 0 0 486px; padding: 40px 0 46px; }
.messages { margin: 0 0 0 50px; padding: 0; list-style: none; font: bold 32px/38px "Liberation Serif", serif; }
.chrome .messages { width: 512px; } .safari .messages { width: 632px; }
.messages li { display: flex; justify-content: space-between; height: 48px; padding: 8px 1px 0 0; border-bottom: 2px solid gray; white-space: nowrap; }
.messages em { font-style: normal; color: red; }
.messages strong { color: green; }
.compose { display: flex; flex-direction: column; margin-left: 46px; }
.chrome .compose { width: 572px; } .safari .compose { width: 706px; }
.compose input, .compose textarea, .compose button { display: block; border: 2px solid #000; border-radius: 10px; font: 22px/26px Inter, sans-serif; background: #fff; outline: none; }
.compose input { height: 84px; padding: 4px 0 0; margin-bottom: 12px; }
.area { position: relative; height: 84px; margin-bottom: 20px; }
.compose textarea { width: 100%; height: 84px; padding: 1px 0 0; resize: none; overflow: hidden; }
.compose ::placeholder { color: #a9a9a9; opacity: 1; }
.grip { position: absolute; right: 4px; bottom: 4px; width: 14px; height: 14px; }
.compose button { width: calc(100% - 4px); height: 80px; padding: 4px 0 0; background: silver; color: #000; }
.safari .compose button { padding: 2px 0 0; }

/* Dock */
.dock {
  position: absolute; left: 116px; top: 1640px; display: flex; width: 2648px; height: 160px; padding-left: 7.500px; border-radius: 12px 12px 0 0;
  background:
    radial-gradient(ellipse 190px 190px at 260px 60px, rgba(122,122,88,.8), transparent),
    radial-gradient(ellipse 200px 160px at 1240px 130px, rgba(108,134,108,.95), transparent),
    radial-gradient(ellipse 260px 120px at 1360px 0, rgba(96,122,76,.9), transparent),
    radial-gradient(ellipse 160px 120px at 2090px 100px, rgba(112,146,70,.8), transparent),
    linear-gradient(180deg, rgba(90,110,70,.35), transparent 60%),
    linear-gradient(90deg, #61884a, #6a9a44 350px, #71a843 620px, #6a9b44 1000px, #648a4b 1300px, #72a841 1800px, #6b9e43 2300px, #67944a);
}
.defs { position: absolute; }
.app { width: 135.350px; height: 160px; overflow: visible; filter: drop-shadow(0 2px 2px rgba(0,0,0,.25)); }
.divider { width: 2px; height: 120px; margin: 20px 28px 0 31px; background: #3f6a2a; }
.petals use { mix-blend-mode: multiply; }
.stamp { font: 600 6.500px Inter, sans-serif; fill: #444d5c; }
.cal-month { font: 400 19px Inter, sans-serif; fill: #fff; }
.cal-day { font: 300 56px Inter, sans-serif; fill: #2a2a2a; letter-spacing: -3px; }
.shield { font: 600 11px Inter, sans-serif; fill: #fff; }
.three-d { font: 400 14px Inter, sans-serif; fill: #222; }
.pages { font: 400 14.500px "Liberation Sans", sans-serif; fill: #fff; letter-spacing: -1px; }
.pages-copy { font: 5px "Liberation Sans", sans-serif; fill: #777; letter-spacing: -.6px; }
.rows { font: 6px "Liberation Sans", sans-serif; fill: #555; }
```
